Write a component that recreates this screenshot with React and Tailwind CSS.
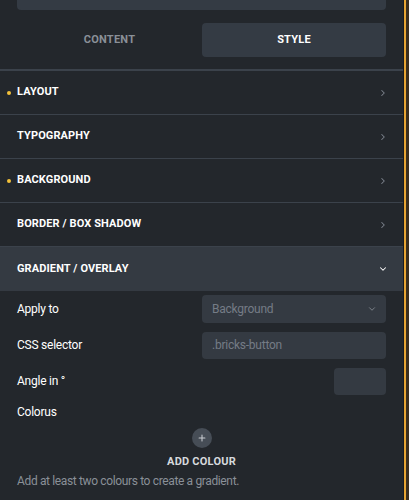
import React from "react";
import { ChevronRight, ChevronDown, Plus } from "lucide-react";

const groups = [
    { name: "LAYOUT", dot: true },
    { name: "TYPOGRAPHY" },
    { name: "BACKGROUND", dot: true },
    { name: "BORDER / BOX SHADOW" },
];

const Row = ({ name, dot }) => (
    <div className="relative flex h-[44px] items-center justify-between border-b border-[#3b424b] pl-[17px] pr-[15px]">
        {dot && <span className="absolute left-[7px] top-[20px] h-[4px] w-[4px] rounded-full bg-[#f3c13a]" />}
        <span className="text-[11px] font-bold tracking-[0.01em] text-white">{name}</span>
        <ChevronRight size={10} strokeWidth={2.5} className="text-[#7d848d]" />
    </div>
);

const Field = ({ label, children }) => (
    <div className="flex h-[36px] items-center justify-between">
        <span className="text-[12px] tracking-[-0.02em] text-white">{label}</span>
        {children}
    </div>
);

export default function App() {
    return (
        <div className="flex h-[500px] w-[409px] bg-[#3a2e1e]" style={{ fontFamily: "Roboto, 'Liberation Sans', sans-serif" }}>
            <div className="flex h-full w-[403px] flex-col overflow-hidden bg-[#23272c]">
                <div className="mx-[17px] h-[10px] rounded-b-[4px] bg-[#343b44]" />

                <div className="mt-[13px] flex px-[17px]">
                    <div className="flex h-[34px] flex-1 items-center justify-center text-[11px] font-bold tracking-[0.02em] text-[#8a9098]">CONTENT</div>
                    <div className="flex h-[34px] w-[184px] items-center justify-center rounded-[4px] bg-[#343b44] text-[11px] font-bold tracking-[0.02em] text-white">STYLE</div>
                </div>

                <div className="mt-[12px] border-t-2 border-[#3b424b]">
                    {groups.map((g) => (
                        <Row key={g.name} {...g} />
                    ))}
                    <div className="flex h-[44px] items-center justify-between bg-[#343a42] pl-[17px] pr-[15px]">
                        <span className="text-[11px] font-bold tracking-[0.01em] text-white">GRADIENT / OVERLAY</span>
                        <ChevronDown size={10} strokeWidth={2.5} className="text-white" />
                    </div>
                </div>

                <div className="flex flex-col px-[17px]">
                    <Field label="Apply to">
                        <div className="flex h-[28px] w-[184px] items-center justify-between rounded-[4px] bg-[#343a42] pl-[10px] pr-[9px] text-[12px] tracking-[-0.02em] text-[#757c86]">
                            <span>Background</span>
                            <ChevronDown size={10} strokeWidth={2} className="text-[#8a9098]" />
                        </div>
                    </Field>
                    <Field label="CSS selector">
                        <div className="flex h-[27px] w-[184px] items-center rounded-[4px] bg-[#343a42] px-[10px] text-[12px] tracking-[-0.02em] text-[#757c86]">.bricks-button</div>
                    </Field>
                    <Field label="Angle in °">
                        <div className="h-[27px] w-[52px] rounded-[4px] bg-[#343a42]" />
                    </Field>
                    <div className="flex h-[26px] items-center">
                        <span className="text-[12px] tracking-[-0.02em] text-white">Colorus</span>
                    </div>

                    <div className="mt-[3px] flex flex-col items-center">
                        <div className="flex h-[20px] w-[20px] items-center justify-center rounded-full bg-[#464d56]">
                            <Plus size={10} strokeWidth={2.5} className="text-[#c9cdd2]" />
                        </div>
                        <span className="mt-[6px] text-[11px] font-bold tracking-[0.02em] text-[#d6d9dd]">ADD COLOUR</span>
                    </div>
                    <p className="mt-[1px] text-[12px] tracking-[-0.03em] text-[#8a9098]">Add at least two colours to create a gradient.</p>
                </div>
            </div>
            <div className="h-full w-px bg-[#1a1d21]" />
            <div className="h-full w-[2px] bg-[#e8a533]" />
            <div className="h-full w-[3px] bg-[#3a2e1e]" />
        </div>
    );
}
